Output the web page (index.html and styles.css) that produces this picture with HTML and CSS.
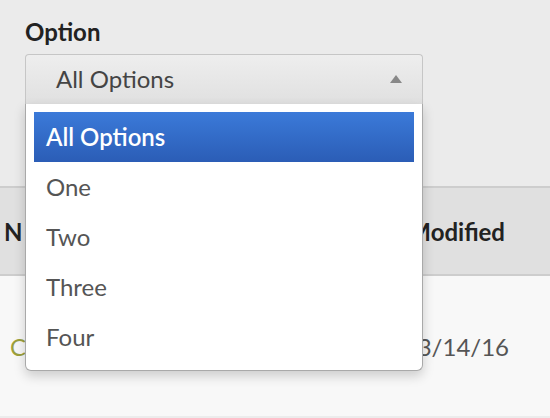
FILE: index.html
```html
<!DOCTYPE html>
<html>
<head>
<meta charset="utf-8">
<link rel="stylesheet" href="styles.css">
</head>
<body>
<div class="page">
  <section class="filter">
    <div class="label">Option</div>
    <div class="select-wrap">
      <div class="select">
        <span class="select-value">All Options</span>
        <svg class="arrow" width="12" height="8" viewBox="0 0 12 8"><path d="M6 0 L12 8 L0 8 Z" fill="#888"/></svg>
      </div>
      <ul class="menu">
        <li class="item active">All Options</li>
        <li class="item">One</li>
        <li class="item">Two</li>
        <li class="item">Three</li>
        <li class="item">Four</li>
      </ul>
    </div>
  </section>
  <div class="table">
    <div class="thead">
      <div class="th th-name">Name</div>
      <div class="th th-mod">Modified</div>
    </div>
    <div class="row">
      <div class="td td-name">Cat</div>
      <div class="td td-date">3/14/16</div>
    </div>
  </div>
</div>
</body>
</html>
```

FILE: styles.css
```css
* { box-sizing: border-box; }
html, body { margin: 0; padding: 0; }
body {
  background: #ebebeb;
  font-family: Lato, "Open Sans", sans-serif;
  width: 550px;
  height: 418px;
  overflow: hidden;
}
.page { display: flex; flex-direction: column; }
.filter {
  height: 186px;
  padding: 17px 0 0 25px;
}
.label {
  font-weight: 700;
  font-size: 24px;
  line-height: 30px;
  color: #222;
  height: 37px;
}
.select-wrap {
  position: relative;
  width: 398px;
}
.select {
  height: 50px;
  border: 1px solid #c6c6c6;
  border-bottom: none;
  border-radius: 4px 4px 0 0;
  background: linear-gradient(#eeeeee, #e0e0e0);
  display: flex;
  align-items: center;
  justify-content: space-between;
  padding: 0 20px 2px 30px;
}
.select-value {
  font-size: 24px;
  color: #444;
}
.arrow { display: block; margin-top: 0; }
.menu {
  position: absolute;
  left: 0;
  top: 50px;
  width: 398px;
  margin: 0;
  padding: 8px 8px;
  list-style: none;
  background: #fff;
  border: 1.5px solid #a9a9a9;
  border-top: none;
  border-radius: 0 0 6px 6px;
  box-shadow: 0 5px 12px rgba(0,0,0,0.18);
  z-index: 10;
}
.item {
  height: 50px;
  display: flex;
  align-items: center;
  padding: 0 0 2px 12px;
  font-size: 24px;
  color: #555;
}
.item.active {
  background: linear-gradient(#3b7ad9, #2b5db6);
  color: #fff;
  font-weight: 600;
}
.table { display: flex; flex-direction: column; }
.thead {
  height: 90px;
  background: #e0e0e0;
  border-top: 2px solid #cdcdcd;
  border-bottom: 2px solid #cdcdcd;
  display: flex;
  justify-content: space-between;
  align-items: center;
  padding: 0 45px 0 4px;
}
.th {
  font-weight: 700;
  font-size: 24px;
  color: #222;
}
.th-name { letter-spacing: 4px; }
.row {
  height: 142px;
  background: #f8f8f8;
  border-bottom: 2px solid #ececec;
  display: flex;
  justify-content: space-between;
  align-items: center;
  padding: 0 41px 0 10px;
}
.td { font-size: 24px; color: #555; }
.td-name { color: #9ca03c; letter-spacing: 3px; }
```
